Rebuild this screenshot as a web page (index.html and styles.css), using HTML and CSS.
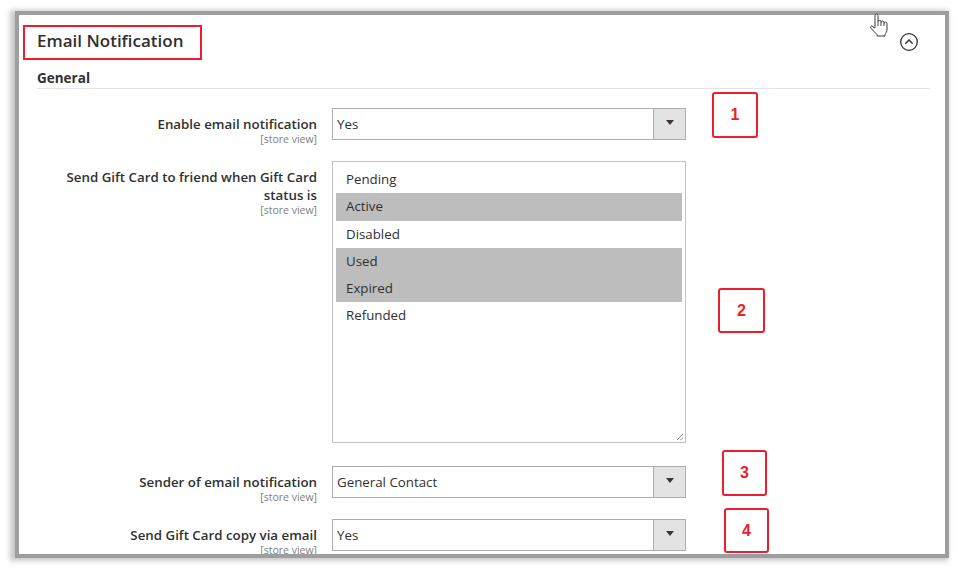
FILE: index.html
```html
<!DOCTYPE html>
<html lang="en">
<head>
<meta charset="utf-8">
<title>Email Notification</title>
<link rel="stylesheet" href="styles.css">
</head>
<body>
<div class="frame">
  <div class="head">
    <h1 class="title">Email Notification</h1>
    <svg class="collapse" width="20" height="20" viewBox="0 0 20 20">
      <circle cx="10" cy="10" r="8.3" fill="none" stroke="#303030" stroke-width="1.3"/>
      <path d="M6.3 11.8 L10 8.1 L13.7 11.8" fill="none" stroke="#303030" stroke-width="1.4"/>
    </svg>
  </div>
  <div class="group">General</div>

  <div class="form">
    <div class="row">
      <div class="label"><span class="lbl">Enable email notification</span><span class="scope">[store view]</span></div>
      <div class="select"><span class="val">Yes</span><span class="btn"><i class="arrow"></i></span></div>
    </div>
    <div class="row multi-row">
      <div class="label"><span class="lbl">Send Gift Card to friend when Gift Card status is</span><span class="scope">[store view]</span></div>
      <div class="listbox">
        <div class="opt">Pending</div>
        <div class="opt sel">Active</div>
        <div class="opt">Disabled</div>
        <div class="opt sel">Used</div>
        <div class="opt sel">Expired</div>
        <div class="opt">Refunded</div>
        <svg class="grip" width="8" height="8" viewBox="0 0 8 8">
          <path d="M7 1 L1 7 M7 4.5 L4.5 7" stroke="#8a8a8a" stroke-width="1"/>
        </svg>
      </div>
    </div>
    <div class="row">
      <div class="label"><span class="lbl">Sender of email notification</span><span class="scope">[store view]</span></div>
      <div class="select"><span class="val">General Contact</span><span class="btn"><i class="arrow"></i></span></div>
    </div>
    <div class="row">
      <div class="label"><span class="lbl">Send Gift Card copy via email</span><span class="scope">[store view]</span></div>
      <div class="select"><span class="val">Yes</span><span class="btn"><i class="arrow"></i></span></div>
    </div>
  </div>

  <div class="mark title-mark"></div>
  <div class="mark num n1">1</div>
  <div class="mark num n2">2</div>
  <div class="mark num n3">3</div>
  <div class="mark num n4">4</div>
</div>

<svg class="cursor" width="20" height="24" viewBox="0 0 20 24">
  <path d="M6 2.5 A1.5 1.5 0 0 1 9 2.5 V8.8 A1.5 1.5 0 0 1 12 8.8 V9.6 A1.5 1.5 0 0 1 15 9.6 V10.6 A1.5 1.5 0 0 1 18 10.6 V16 C18 18.5 17 20 16 21.5 V23 H8 V21.5 C6.5 20 4 17.5 2 15.2 C1.2 14.2 2 12.6 3.3 13.3 L6 15 Z" fill="#fff" stroke="#3a3a3a" stroke-width="1" stroke-linejoin="round"/>
  <path d="M9 9 V13 M12 9.6 V13 M15 10.6 V13" stroke="#3a3a3a" stroke-width="0.9"/>
</svg>
</body>
</html>
```

FILE: styles.css
```css
html, body {
  margin: 0;
  padding: 0;
  background: #ffffff;
}

body {
  font-family: "Open Sans", "Liberation Sans", sans-serif;
  color: #303030;
  width: 964px;
  height: 569px;
  overflow: hidden;
  position: relative;
}

.frame {
  position: relative;
  margin: 15px 0 0 19px;
  width: 926px;
  height: 539px;
  background: #fff;
  overflow: hidden;
  box-sizing: border-box;
  padding: 0 15px 0 18px;
  box-shadow: 0 0 0 4px #9e9e9e, -3px 1px 5px 6px rgba(0, 0, 0, 0.22);
}

.head {
  display: flex;
  justify-content: space-between;
  align-items: flex-start;
  padding-top: 14px;
}

.title {
  margin: 0;
  font-size: 17px;
  font-weight: 600;
  line-height: 24px;
  color: #303030;
}

.collapse {
  margin-top: 3px;
  margin-right: 11px;
}

.group {
  margin-top: 16px;
  font-size: 13.5px;
  font-weight: 700;
  line-height: 18px;
  padding-bottom: 1px;
  border-bottom: 1px solid #e3e3e3;
}

.form {
  padding-top: 19px;
}

.row {
  display: grid;
  grid-template-columns: 280px 354px;
  column-gap: 15px;
  align-items: start;
  margin-bottom: 21px;
}

.row.multi-row {
  margin-bottom: 23px;
}

.label {
  text-align: right;
  padding-top: 7px;
  display: flex;
  flex-direction: column;
  align-items: flex-end;
}

.lbl {
  font-size: 13.3px;
  font-weight: 600;
  line-height: 18px;
}

.scope {
  font-size: 10.5px;
  line-height: 14px;
  margin-top: -1px;
  color: #808080;
  margin-bottom: -12px;
}

.select {
  display: flex;
  height: 32px;
  box-sizing: border-box;
  border: 1px solid #adadad;
  background: #fff;
}

.val {
  flex: 1;
  padding-left: 4px;
  font-size: 13.3px;
  line-height: 30px;
}

.btn {
  width: 31px;
  background: #e3e3e3;
  border-left: 1px solid #adadad;
  display: flex;
  align-items: center;
  justify-content: center;
}

.arrow {
  display: block;
  width: 0;
  height: 0;
  border-top: 5px solid #41362f;
  border-left: 4px solid transparent;
  border-right: 4px solid transparent;
  margin-top: -3px;
}

.listbox {
  position: relative;
  height: 282px;
  box-sizing: border-box;
  border: 1px solid #c2c2c2;
  padding: 4px 3px;
  background: #fff;
}

.opt {
  height: 27.3px;
  line-height: 27.3px;
  padding-left: 10px;
  font-size: 13.3px;
}

.opt.sel {
  background: #bdbdbd;
}

.grip {
  position: absolute;
  right: 1px;
  bottom: 1px;
}

.mark {
  position: absolute;
  box-sizing: border-box;
  border: 2px solid #ec1e2d;
}

.title-mark {
  left: 4px;
  top: 10px;
  width: 179px;
  height: 35px;
}

.num {
  border-radius: 3px;
  display: flex;
  align-items: center;
  justify-content: center;
  font-family: "Liberation Sans", Arial, sans-serif;
  font-weight: 700;
  font-size: 16px;
  color: #ec1e2d;
}

.n1 { left: 693px; top: 77px; width: 46px; height: 46px; }
.n2 { left: 699px; top: 273px; width: 47px; height: 45px; }
.n3 { left: 703px; top: 435px; width: 45px; height: 46px; }
.n4 { left: 705px; top: 493px; width: 45px; height: 45px; }

.cursor {
  position: absolute;
  left: 869px;
  top: 13px;
}
```
